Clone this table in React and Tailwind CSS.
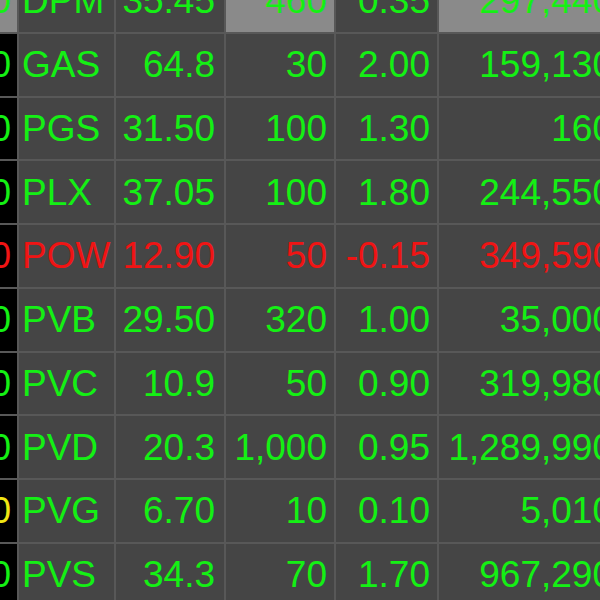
import React from "react";

const rows = [
  { flag: "g", sym: "DPM", price: "35.45", vol: "460", chg: "0.35", total: "297,440", color: "g", hl: true },
  { flag: "g", sym: "GAS", price: "64.8", vol: "30", chg: "2.00", total: "159,130", color: "g" },
  { flag: "g", sym: "PGS", price: "31.50", vol: "100", chg: "1.30", total: "160", color: "g" },
  { flag: "g", sym: "PLX", price: "37.05", vol: "100", chg: "1.80", total: "244,550", color: "g" },
  { flag: "r", sym: "POW", price: "12.90", vol: "50", chg: "-0.15", total: "349,590", color: "r" },
  { flag: "g", sym: "PVB", price: "29.50", vol: "320", chg: "1.00", total: "35,000", color: "g" },
  { flag: "g", sym: "PVC", price: "10.9", vol: "50", chg: "0.90", total: "319,980", color: "g" },
  { flag: "g", sym: "PVD", price: "20.3", vol: "1,000", chg: "0.95", total: "1,289,990", color: "g" },
  { flag: "y", sym: "PVG", price: "6.70", vol: "10", chg: "0.10", total: "5,010", color: "g" },
  { flag: "g", sym: "PVS", price: "34.3", vol: "70", chg: "1.70", total: "967,290", color: "g" },
];

const textColor = {
  g: "text-[#14f014]",
  r: "text-[#f01414]",
  y: "text-[#f0e614]",
};

function Cell({ className, children }) {
  return (
    <div className={"flex h-[61.75px] shrink-0 items-center " + className}>
      {children}
    </div>
  );
}

export default function App() {
  return (
    <div
      className="w-[600px] h-[600px] overflow-hidden bg-[#585858] text-[37px] leading-none"
      style={{ fontFamily: '"Liberation Sans", Arial, sans-serif' }}
    >
      <div className="-mt-[30px] -ml-[23px] flex flex-col gap-[2px]">
        {rows.map((r) => {
          const c = textColor[r.color];
          const light = r.hl ? "bg-[#8a8a8a]" : "bg-[#454545]";
          return (
            <div key={r.sym} className="flex gap-[2px]">
              {/* status column, mostly off screen */}
              <Cell className={"w-[40px] justify-end pr-[6px] " + (r.hl ? "bg-[#8a8a8a]" : "bg-black") + " " + textColor[r.flag]}>
                0
              </Cell>
              <Cell className={"w-[95px] pl-[3px] bg-[#454545] " + c}>{r.sym}</Cell>
              <Cell className={"w-[108px] justify-end pr-[9px] bg-[#454545] " + c}>{r.price}</Cell>
              <Cell className={"w-[108px] justify-end pr-[7px] " + light + " " + c}>{r.vol}</Cell>
              <Cell className={"w-[101px] justify-end pr-[7px] bg-[#454545] " + c}>{r.chg}</Cell>
              <Cell className={"w-[182px] justify-end pr-[8px] " + light + " " + c}>{r.total}</Cell>
            </div>
          );
        })}
      </div>
    </div>
  );
}
